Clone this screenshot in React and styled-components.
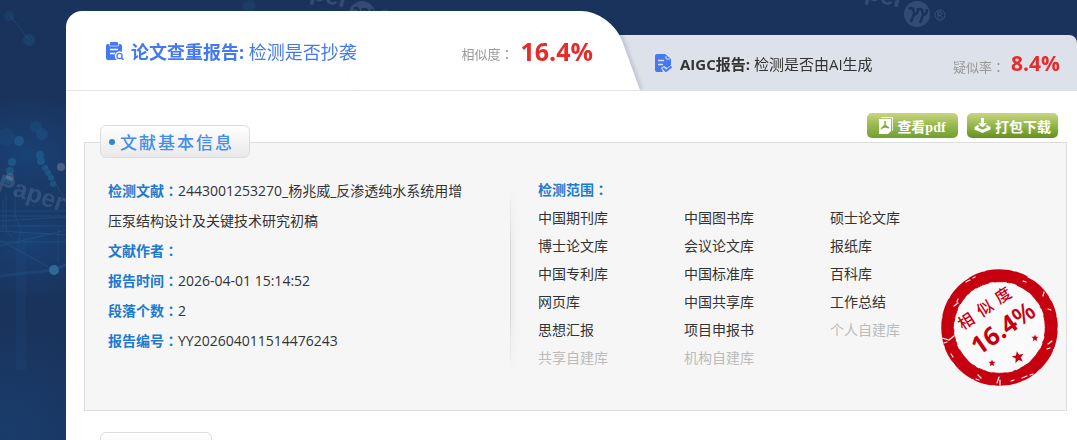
import styled, { createGlobalStyle } from "styled-components";

const GlobalStyle = createGlobalStyle`
  *{
    box-sizing: border-box;
  }
  body{
    margin: 0;
    min-height: 100vh;
    overflow: hidden;
    background-color: #1a335d;
    color: #333;
    font-family: "Open Sans", "Noto Sans CJK SC", sans-serif;
    font-size: 14px;
  }
  h2, p, ul{
    margin: 0;
    padding: 0;
  }
`;

const StyledBackdrop = styled.svg`
  position: absolute;
  top: 0;
  left: 0;
  z-index: -1;
  text{
    font-family: "Liberation Sans", sans-serif;
    font-weight: bold;
    font-size: 25px;
    fill: #8fa0bd;
    opacity: 0.22;
  }
`;

const StyledPage = styled.main`
  padding: 11px 0 0 66px;
`;

const StyledTabs = styled.nav`
  display: grid;
  grid-template-columns: 574fr 437fr;
  align-items: end;
`;

const StyledTab = styled.a`
  position: relative;
  display: flex;
  align-items: center;
  color: inherit;
  text-decoration: none;
  white-space: nowrap;
  > svg{
    flex: none;
  }
  > .name{
    flex: 1;
    > b{
      font-weight: 700;
    }
  }
  > .label{
    color: #999;
    font-size: 13px;
    padding-top: 6px;
  }
  > .rate{
    color: #e62b2b;
    font-weight: 700;
  }
`;

const StyledMainTab = styled(StyledTab)`
  z-index: 1;
  height: 80px;
  padding: 0 47px 0 40px;
  background: linear-gradient(#fff, #fff) no-repeat 0 0 / 60% 100%;
  border-bottom: 1px solid #e4e6ea;
  border-top-left-radius: 16px;
  color: #4479f2;
  font-size: 18px;
  &::before{
    content: "";
    position: absolute;
    inset: 0 0 0 50%;
    z-index: -1;
    background-color: #fff;
    border-top-right-radius: 30px;
    box-shadow: 2px 0 4px rgba(30, 50, 90, 0.2);
    transform: skewX(20deg);
    transform-origin: bottom;
    clip-path: inset(0 -10px 0 0);
  }
  > .name{
    padding-left: 7px;
  }
  > .rate{
    padding-left: 7px;
    font-size: 25px;
  }
`;

const StyledSideTab = styled(StyledTab)`
  height: 56px;
  margin-left: -30px;
  padding: 0 17px 0 45px;
  background-color: #dde1e9;
  border-top-right-radius: 8px;
  font-size: 15px;
  > .name{
    padding-left: 8px;
  }
  > .rate{
    padding-left: 6px;
    font-size: 21px;
  }
`;

const StyledReport = styled.section`
  min-height: calc(100vh - 91px);
  padding: 22px 10px 0 18px;
  background-color: #fff;
`;

const StyledReportHead = styled.div`
  position: relative;
  z-index: 1;
  display: flex;
  justify-content: space-between;
  align-items: flex-start;
  margin-bottom: -16px;
`;

const StyledTitle = styled.h2`
  display: flex;
  align-items: center;
  width: fit-content;
  height: 33px;
  margin: ${({ $top }) => $top}px 0 0 16px;
  padding: 0 15px 0 8px;
  gap: 5px;
  border: 1px solid #ddd;
  border-radius: 6px;
  background-image: linear-gradient(#fff, #e9e9e9);
  color: #428ee8;
  font-size: 17px;
  font-weight: 500;
  letter-spacing: 2px;
  white-space: nowrap;
  &::before{
    content: "";
    width: 6px;
    height: 6px;
    border-radius: 50%;
    background-color: #2f86d2;
  }
`;

const StyledButtons = styled.div`
  display: flex;
  gap: 9px;
  padding-right: 9px;
`;

const StyledButton = styled.button`
  display: flex;
  align-items: center;
  justify-content: center;
  width: 91px;
  height: 25px;
  padding: 0;
  gap: 4px;
  border: 0;
  border-radius: 5px;
  background-image: linear-gradient(#c9d681, #9bba52 45%, ${({ $end }) => $end});
  color: #fff;
  cursor: pointer;
  font-family: "Liberation Serif", "Noto Sans CJK SC", serif;
  font-size: 14px;
  font-weight: 700;
  white-space: nowrap;
`;

const StyledPanel = styled.div`
  position: relative;
  display: flex;
  margin-bottom: 21px;
  padding: 33px 23px 38px;
  border: 1px solid #ddd;
  background-color: #f6f6f6;
`;

const StyledInfo = styled.div`
  flex: none;
  width: 365px;
  line-height: 30px;
`;

const StyledLabel = styled.strong`
  color: #1c7bd0;
  font-weight: 700;
`;

const StyledColon = styled.span`
  font-family: "Noto Sans CJK TC", sans-serif;
  line-height: 1;
`;

const StyledDivider = styled.div`
  flex: none;
  width: 8px;
  margin: 12px 20px 0 37px;
  background-image: linear-gradient(#f6f6f6, transparent 30%, transparent 70%, #f6f6f6), linear-gradient(90deg, #ccc, #ececec 15%, #f6f6f6);
`;

const StyledScope = styled.div`
  line-height: 28px;
  > ul{
    display: grid;
    grid-template-columns: repeat(3, 146px);
    list-style: none;
  }
`;

const StyledItem = styled.li`
  color: ${({ $off }) => $off ? "#bbb" : "#333"};
`;

const StyledStamp = styled.svg`
  position: absolute;
  right: 6px;
  bottom: 22px;
  text{
    fill: #c7000f;
    font-family: "Open Sans", "Noto Sans CJK SC", sans-serif;
    text-anchor: middle;
  }
`;

const info = [
  { label: '检测文献', value: '2443001253270_杨兆威_反渗透纯水系统用增压泵结构设计及关键技术研究初稿' },
  { label: '文献作者', value: '' },
  { label: '报告时间', value: '2026-04-01 15:14:52' },
  { label: '段落个数', value: '2' },
  { label: '报告编号', value: 'YY202604011514476243' },
];

const sources = [
  '中国期刊库', '中国图书库', '硕士论文库',
  '博士论文库', '会议论文库', '报纸库',
  '中国专利库', '中国标准库', '百科库',
  '网页库', '中国共享库', '工作总结',
  '思想汇报', '项目申报书', '个人自建库',
  '共享自建库', '机构自建库',
];

const disabled = ['个人自建库', '共享自建库', '机构自建库'];

const Colon = () => <StyledColon>：</StyledColon>;

const WatermarkLogo = ({ x, y }) => (
  <g transform={`translate(${x} ${y})`}>
    <text transform="rotate(14)" textAnchor="end" x="-16" y="-2">Paper</text>
    <circle r="13" fill="#8fa0bd" opacity="0.22" />
    <path d="M-8-5c4-3 5 2 5 5 3 1 4-2 4-6M-3 0l-3 8M1-4c4-3 5 2 5 5 3 0 4-3 4-6M6 1l-3 8" fill="none" stroke="#1a335d" strokeWidth="2.5" />
    <circle cx="23" cy="1" r="5" fill="none" stroke="#8fa0bd" opacity="0.25" />
    <path d="M21 4v-6h3q2 2 0 3h-3m2 0l2 3" fill="none" stroke="#8fa0bd" opacity="0.25" />
  </g>
);

const Backdrop = () => (
  <StyledBackdrop width="100%" height="100%" aria-hidden="true">
    <defs>
      <radialGradient id="glow">
        <stop offset="0" stopColor="#17508a" stopOpacity="0.5" />
        <stop offset="1" stopColor="#17508a" stopOpacity="0" />
      </radialGradient>
    </defs>
    <ellipse cx="28" cy="155" rx="85" ry="60" fill="url(#glow)" />
    <ellipse cx="30" cy="240" rx="80" ry="60" fill="url(#glow)" />
    <ellipse cx="10" cy="430" rx="110" ry="110" fill="url(#glow)" opacity="0.6" />
    <g fill="#2378a8" opacity="0.4">
      <circle cx="9" cy="16" r="5" opacity="0.4" />
      <circle cx="29" cy="40" r="6" opacity="0.5" />
      <circle cx="249" cy="6" r="6" opacity="0.4" />
      <circle cx="19" cy="141" r="5" />
      <circle cx="6" cy="137" r="9" opacity="0.3" />
      <circle cx="36" cy="127" r="6" opacity="0.4" />
      <circle cx="42" cy="134" r="6" opacity="0.5" />
      <circle cx="12" cy="162" r="4" />
      <circle cx="10" cy="171" r="4" />
      <circle cx="8" cy="180" r="4" />
      <circle cx="40" cy="155" r="4" />
      <circle cx="41" cy="161" r="4" />
      <circle cx="45" cy="168" r="3" />
      <circle cx="48" cy="173" r="3" />
      <circle cx="51" cy="178" r="3" />
      <circle cx="53" cy="184" r="3" />
    </g>
    <circle cx="61" cy="167" r="4" fill="#6d7a9c" opacity="0.6" />
    <circle cx="10" cy="177" r="4" fill="#6d7a9c" opacity="0.4" />
    <circle cx="54" cy="270" r="5" fill="#3a7fa8" opacity="0.7" />
    <g stroke="#3579a8" fill="none" opacity="0.25">
      <path d="M0 211h66M0 216h66M0 221l66-4M0 226h66M0 231l66 4M0 242h66M0 246l66-16M0 240l54 30 12-6M46 165l20 38" />
      <path d="M6 195v35l6 8M15 190v25l6 15-3 14M58 228v34M3 200v30M9 14l20 26" />
    </g>
    <path d="M0 276l54-6 12-5" stroke="#24639a" strokeWidth="3" opacity="0.25" fill="none" />
    <path d="M16 240h10v130h-10z" fill="#24639a" opacity="0.1" />
    <text transform="translate(-4 190) rotate(18)">Paper</text>
    <WatermarkLogo x={362} y={14} />
    <WatermarkLogo x={917} y={14} />
  </StyledBackdrop>
);

const SearchReportIcon = () => (
  <svg width="18" height="18" viewBox="0 0 18 18">
    <path d="M2 2h12a2 2 0 0 1 2 2v6a4.600 4.600 0 0 0-5 8H2a2 2 0 0 1-2-2V4a2 2 0 0 1 2-2z" fill="#4479f2" />
    <path d="M3.500 1v3h9V1" fill="none" stroke="#fff" opacity="0.6" />
    <rect x="4" y="0" width="8" height="3" rx="1" fill="#4479f2" />
    <path d="M4 7.500h8M4 11.500h5" stroke="#fff" strokeWidth="1.5" />
    <circle cx="13.500" cy="14" r="2.600" fill="#fff" stroke="#4479f2" strokeWidth="1.300" />
    <path d="M15.500 16l2 2" stroke="#4479f2" strokeWidth="1.500" />
  </svg>
);

const CheckReportIcon = () => (
  <svg width="17" height="18" viewBox="0 0 17 18">
    <path d="M2 0h8l6 5v6l-4 3-3-2-3 2 2 4H2a2 2 0 0 1-2-2V2a2 2 0 0 1 2-2z" fill="#4479f2" />
    <path d="M11 2v3h4" fill="none" stroke="#dde1e9" />
    <path d="M3 6.500h6M3 10.500h5" stroke="#dde1e9" strokeWidth="1.500" />
    <path d="M8 14l3 3 5.500-4.500" fill="none" stroke="#4479f2" strokeWidth="2" />
  </svg>
);

const PdfIcon = () => (
  <svg width="14" height="17" viewBox="0 0 14 17">
    <path d="M2 0h12v14h-1V1H2z" fill="#fff" opacity="0.8" />
    <path d="M0 2h12v12l-3 3H0z" fill="#fff" />
    <path d="M6 4v4l-4 4M6 8l4 3M3 11q3-2 7 0" fill="none" stroke="#86a944" strokeWidth="1.4" />
  </svg>
);

const DownloadIcon = () => (
  <svg width="17" height="15" viewBox="0 0 17 15">
    <path d="M7 0h3v5h3L8.500 9.500 4 5h3z" fill="#fff" />
    <path d="M4 7L0.500 9v2.500L8.500 15l8-3.500V9L13 7l-1.500 1.500L13.500 9.500l-5 2-5-2 2-1z" fill="#fff" />
  </svg>
);

const star = 'M0-6l1.600 4H6L2.600 1 3.800 5.500 0 3-3.800 5.500-2.600 1-6-2h4.400z';

const Stamp = () => (
  <StyledStamp width="120" height="120" viewBox="0 0 120 120">
    <circle cx="59.500" cy="59.500" r="52" fill="#fafafa" stroke="#c7000f" strokeWidth="12.500" />
    <circle cx="59.500" cy="59.500" r="58.500" fill="none" stroke="#f6f6f6" strokeDasharray="3 19 2 23 4 16 2 27" />
    <circle cx="59.500" cy="59.500" r="45.800" fill="none" stroke="#c7000f" strokeDasharray="9 4 3 7 14 5" />
    <g stroke="#fafafa" strokeWidth="1.200" strokeLinecap="round" fill="none">
      <path d="M26 14l4-2M33 10l2-1M14 38l4-3M17 34l1-3M2 70l7 2 5-4M4 75l3-1M88 9l4 2M83 13l3 1M104 24l-1 4M108 41l3 1M112 73l-4 3M107 81l3-1M38 107l3 3M36 111l3 1M82 110l5-2M90 107l3-1M57 115l2-6M60 112v5M11 86l2 3M71 113l3-1" />
    </g>
    <g fontSize="16" fontWeight="500">
      <text transform="translate(26 53) rotate(-33)" y="6">相</text>
      <text transform="translate(45 40) rotate(-33)" y="6">似</text>
      <text transform="translate(63 27) rotate(-33)" y="6">度</text>
    </g>
    <text transform="translate(63 60) rotate(-35)" y="9" fontSize="25" fontWeight="700">16.4<tspan fontWeight="600">%</tspan></text>
    <g fill="#c7000f">
      <path d={star} transform="translate(78 89) rotate(-12)" />
      <path d={star} transform="translate(52 95) scale(0.6)" />
      <path d={star} transform="translate(95 70) scale(0.6)" />
    </g>
  </StyledStamp>
);

const App = () => {
  return (
    <>
      <GlobalStyle />
      <Backdrop />
      <StyledPage>
        <StyledTabs>
          <StyledMainTab href="#check">
            <SearchReportIcon />
            <span className="name"><b>论文查重报告:</b> 检测是否抄袭</span>
            <span className="label">相似度<Colon /></span>
            <span className="rate">16.4%</span>
          </StyledMainTab>
          <StyledSideTab href="#aigc">
            <CheckReportIcon />
            <span className="name"><b>AIGC报告:</b> 检测是否由AI生成</span>
            <span className="label">疑似率<Colon /></span>
            <span className="rate">8.4%</span>
          </StyledSideTab>
        </StyledTabs>
        <StyledReport>
          <StyledReportHead>
            <StyledTitle $top={12}>文献基本信息</StyledTitle>
            <StyledButtons>
              <StyledButton $end="#6fa02f"><PdfIcon />查看pdf</StyledButton>
              <StyledButton $end="#64901c"><DownloadIcon />打包下载</StyledButton>
            </StyledButtons>
          </StyledReportHead>
          <StyledPanel>
            <StyledInfo>
              {
                info.map(el => (
                  <p key={el.label}><StyledLabel>{el.label}<Colon /></StyledLabel>{el.value}</p>
                ))
              }
            </StyledInfo>
            <StyledDivider />
            <StyledScope>
              <StyledLabel>检测范围<Colon /></StyledLabel>
              <ul>
                {
                  sources.map(el => (
                    <StyledItem key={el} $off={disabled.includes(el)}>{el}</StyledItem>
                  ))
                }
              </ul>
            </StyledScope>
            <Stamp />
          </StyledPanel>
          <StyledTitle $top={0}>总体结论</StyledTitle>
        </StyledReport>
      </StyledPage>
    </>
  );
}

export default App;
